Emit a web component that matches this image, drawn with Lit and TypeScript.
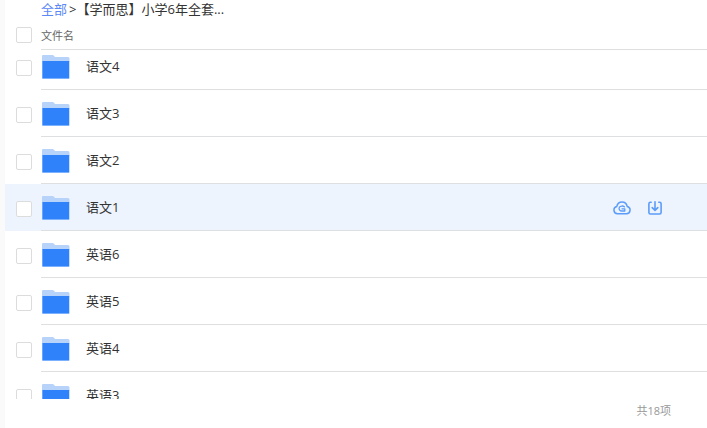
import { LitElement, html, svg, css } from "lit";
import { customElement, property, state } from "lit/decorators.js";
import { classMap } from "lit/directives/class-map.js";

const folderIcon = svg`
  <svg class="folder" width="28" height="26" viewBox="0 0 28 26" aria-hidden="true">
    <path d="M0 8V2Q0 1 1 1H10.5Q11.5 1 12.2 2L13 3H26Q27.5 3 27.5 4.5V8Z" fill="#b7d3fa" />
    <path d="M0 7H27.5V24Q27.5 25 26.5 25H1Q0 25 0 24Z" fill="#8fbdfd" />
    <path d="M.6 7H27V24.2H.6Z" fill="#3082fb" />
  </svg>`;

const cloudIcon = svg`
  <svg width="18" height="16" viewBox="0 0 18 16" fill="none" stroke="#5c9cf9" stroke-width="1.5" stroke-linecap="round" stroke-linejoin="round" aria-hidden="true">
    <path d="M4.5 13.7A3.7 3.7 0 0 1 3.8 6.4C4.4 3.6 6.4 2 9 2S13.6 3.6 14.2 6.4A3.7 3.7 0 0 1 13.5 13.7Z" />
    <path d="M6.4 7.2C7.4 5.8 10 5.6 11.4 6.8M6.4 7.2C5.4 9 6.8 11 9 11H11.8V8.8H9" stroke-width="1.3" />
  </svg>`;

const downloadIcon = svg`
  <svg width="16" height="16" viewBox="0 0 16 16" fill="none" stroke="#5c9cf9" stroke-width="1.6" stroke-linecap="round" stroke-linejoin="round" aria-hidden="true">
    <path d="M4.2 2.3H3.4Q1.9 2.3 1.9 3.8V12.5Q1.9 14 3.4 14H12.6Q14.1 14 14.1 12.5V3.8Q14.1 2.3 12.6 2.3H11.8" />
    <path d="M8 1.8V10M5.2 7.6L8 10.4L10.8 7.6" />
  </svg>`;

const controls = css`
  * {
    box-sizing: border-box;
  }
  .check {
    appearance: none;
    flex: none;
    width: 16px;
    height: 16px;
    margin: 0;
    border: 1px solid #dcdcdc;
    border-radius: 2px;
    background: #fff;
  }
  .check:checked {
    background: #3082fb;
    border-color: #3082fb;
  }
`;

@customElement("file-row")
export class FileRow extends LitElement {
  @property() name = "";
  @property({ type: Boolean }) active = false;

  static styles = [
    controls,
    css`
      :host {
        display: block;
      }
      .row {
        display: flex;
        align-items: center;
        gap: 9px;
        height: 47px;
        padding-left: 11px;
      }
      .row.active {
        background: #edf4fe;
      }
      .body {
        flex: 1;
        align-self: stretch;
        display: flex;
        align-items: center;
        gap: 16px;
        padding: 0 44px 0 1px;
        border-bottom: 1px solid #dedfe1;
      }
      .check {
        margin-top: 2px;
      }
      svg {
        display: block;
      }
      .folder {
        margin-top: 2px;
      }
      .name {
        flex: 1;
        color: #333;
        line-height: 20px;
      }
      .actions {
        display: flex;
        gap: 16px;
        padding-top: 2px;
      }
      .action {
        padding: 0;
        border: 0;
        background: none;
        cursor: pointer;
      }
    `,
  ];

  render() {
    return html`
      <div class=${classMap({ row: true, active: this.active })}>
        <input class="check" type="checkbox" id="pick" />
        <div class="body">
          ${folderIcon}
          <label class="name" for="pick">${this.name}</label>
          ${this.active
            ? html`<div class="actions">
                <button class="action" aria-label="转存">${cloudIcon}</button>
                <button class="action" aria-label="下载">${downloadIcon}</button>
              </div>`
            : null}
        </div>
      </div>
    `;
  }
}

@customElement("app-root")
export class AppRoot extends LitElement {
  @state() private files = ["语文4", "语文3", "语文2", "语文1", "英语6", "英语5", "英语4", "英语3"];
  @state() private active = "语文1";

  static styles = [
    controls,
    css`
      :host {
        display: flex;
        flex-direction: column;
        height: 100vh;
        box-sizing: border-box;
        border-left: 5px solid #fafafa;
        background: #fff;
        color: #333;
        font: 13px/20px "Open Sans", "Noto Sans CJK SC", sans-serif;
        overflow: hidden;
      }
      .crumbs {
        flex: none;
        display: flex;
        height: 20px;
        padding-left: 36px;
        line-height: 18px;
        white-space: nowrap;
      }
      .crumbs a {
        margin-right: 2px;
        color: #5b87f7;
        text-decoration: none;
      }
      .head {
        flex: none;
        display: flex;
        align-items: center;
        gap: 9px;
        height: 30px;
        padding-left: 11px;
      }
      .title {
        flex: 1;
        align-self: stretch;
        border-bottom: 1px solid #dedfe1;
        color: #666;
        font-size: 11px;
        line-height: 32px;
      }
      .list {
        flex: 1;
        min-height: 0;
        overflow: hidden;
      }
      .rows {
        margin-top: -7px;
      }
      .foot {
        flex: none;
        height: 29px;
        padding-right: 36px;
        color: #999;
        font-size: 11px;
        line-height: 24px;
        text-align: right;
      }
    `,
  ];

  render() {
    return html`
      <nav class="crumbs">
        <a href="#">全部</a>
        <span>&gt;</span>
        <span>【学而思】小学6年全套...</span>
      </nav>
      <div class="head">
        <input class="check" type="checkbox" id="all" />
        <label class="title" for="all">文件名</label>
      </div>
      <main class="list">
        <div class="rows">
          ${this.files.map(
            (name) => html`<file-row .name=${name} .active=${name === this.active}></file-row>`
          )}
        </div>
      </main>
      <footer class="foot">共${18}项</footer>
    `;
  }
}
